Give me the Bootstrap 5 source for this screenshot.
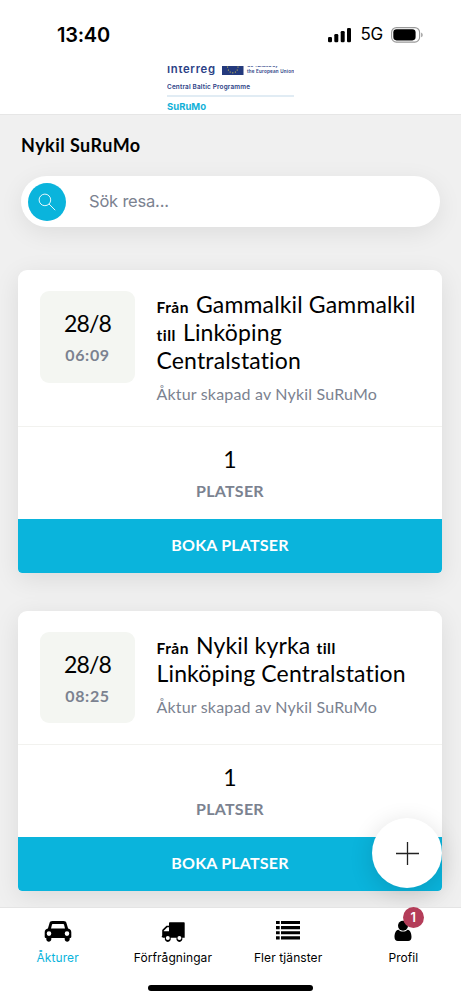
<!DOCTYPE html>
<html lang="sv">
<head>
<meta charset="utf-8">
<meta name="viewport" content="width=device-width, initial-scale=1">
<title>Nykil SuRuMo</title>
<link href="https://cdn.jsdelivr.net/npm/bootstrap@5.3.0/dist/css/bootstrap.min.css" rel="stylesheet">
<style>
  :root { --brand: #0ab4dc; --muted: #7b8290; }
  body { font-family: Lato, sans-serif; color: #000; background: #f0f0f0; font-variant-ligatures: none; }
  svg { display: block; }
  .screen { height: 1000px; overflow: hidden; }
  .top { height: 115px; border-bottom: 1px solid #e6e6e6; }
  .status { height: 66px; padding: 3px 38px 0 57px; font-family: Inter, sans-serif; }
  .clock { font-size: 20px; font-weight: 600; letter-spacing: -.25px; }
  .net { font-size: 17px; letter-spacing: -.2px; margin: 1px 8px 0 8px; }
  .feed { padding: 18px 19px 0 18px; min-height: 0; overflow: hidden; }
  .heading { font-size: 18px; line-height: 24px; font-weight: 700; margin: 0 0 19px 3px; letter-spacing: .45px; }
  .search { height: 51px; margin: 0 2px 43px 3px; padding-left: 7px; border-radius: 26px; box-shadow: 0 6px 24px rgba(0,0,0,.08); }
  .search-icon { width: 38px; height: 38px; background: var(--brand); }
  .search-text { font-family: Inter, sans-serif; font-size: 16.5px; color: var(--muted); margin-left: 23px; letter-spacing: -.2px; }
  .trip { border-radius: 9px 9px 4px 4px; box-shadow: 0 6px 26px rgba(0,0,0,.09); margin-bottom: 37.5px; overflow: hidden; background: #fff; }
  .trip-body { padding: 21px 21px 21px 22px; gap: 21.5px; border-bottom: 1px solid #f2f2ef; }
  .when { width: 95px; height: 91.5px; border-radius: 9px; background: #f4f6f2; flex: none; }
  .day { font-size: 23px; line-height: 34px; letter-spacing: -.8px; margin-top: -1px; }
  .hour { font-size: 16px; line-height: 30px; font-weight: 700; color: var(--muted); letter-spacing: .65px; }
  .route { font-size: 23px; line-height: 28px; font-weight: 400; margin: -1px 0 0; white-space: nowrap; letter-spacing: .15px; }
  .route b { font-size: 15.5px; line-height: 1; letter-spacing: .5px; margin-right: 1px; }
  .by { font-size: 16px; line-height: 30px; color: var(--muted); padding-top: 5px; height: 31px; white-space: nowrap; letter-spacing: .18px; }
  .seats { height: 91.5px; padding-top: 15px; }
  .seats .count { font-size: 23px; line-height: 34px; }
  .seats .unit { font-size: 16px; line-height: 29px; font-weight: 700; color: var(--muted); letter-spacing: .25px; }
  .book { height: 54.5px; border-radius: 0 0 4px 4px; background: var(--brand); color: #fff; font-size: 16px; font-weight: 700; border: 0; width: 100%; padding: 0 0 2px; letter-spacing: .2px; }
  .fab { width: 70px; height: 70px; right: 19px; bottom: 112px; box-shadow: 0 5px 24px rgba(0,0,0,.14); border: 0; padding: 0; }
  .tabs { height: 93px; border-top: 1px solid #e4e4e4; font-family: Inter, sans-serif; font-size: 12px; }
  .tab { width: 115.25px; padding-top: 9px; color: #000; text-decoration: none; letter-spacing: .08px; }
  .tab.on { color: var(--brand); }
  .tab svg { height: 28px; }
  .tab .lbl { line-height: 18px; margin-top: 4px; }
  .count-badge { width: 21px; height: 21px; left: 57px; top: -1px; background: #b43d59; color: #fff; font-size: 13px; font-weight: 600; }
  .home { width: 165px; height: 6px; border-radius: 3px; background: #000; left: 148px; bottom: 9px; }
</style>
</head>
<body>
<div class="screen position-relative d-flex flex-column">
  <header class="top bg-white flex-shrink-0">
    <div class="status d-flex align-items-center">
      <span class="clock me-auto">13:40</span>
      <svg width="24" height="16" viewBox="0 0 24 16"><rect x="0" y="10" width="4" height="5.3" rx="1.3"/><rect x="6.3" y="7" width="4" height="8.3" rx="1.3"/><rect x="12.7" y="4" width="4" height="11.3" rx="1.3"/><rect x="19" y="1" width="4" height="14.3" rx="1.3"/></svg>
      <span class="net">5G</span>
      <svg width="32" height="16" viewBox="0 0 32 16"><rect x=".6" y=".6" width="28" height="14.5" rx="4.8" fill="none" stroke="#999" stroke-width="1.1"/><rect x="2.3" y="2.3" width="22.3" height="11.1" rx="3.3"/><path d="M30.2 5.5q1.5.7 1.5 2.4t-1.5 2.4z" fill="#999"/></svg>
    </div>
    <svg class="mx-auto" width="127" height="46" viewBox="0 0 127 46" font-family="Inter, sans-serif" fill="#2b4186">
      <text x="0" y="7.4" font-size="11.3" font-weight="600" textLength="48">Interreg</text>
      <rect x="55" y="-6" width="21.5" height="15" fill="#243a7d"/>
      <g fill="#e8d44a"><circle cx="60.6" cy="1" r=".6"/><circle cx="61.4" cy="4" r=".6"/><circle cx="63.2" cy="6" r=".6"/><circle cx="65.8" cy="6.8" r=".6"/><circle cx="68.4" cy="6" r=".6"/><circle cx="70.2" cy="4" r=".6"/><circle cx="71" cy="1" r=".6"/></g>
      <text x="80" y="1.3" font-size="4.6" font-weight="600" textLength="31">Co-funded by</text>
      <text x="80" y="6.7" font-size="4.6" font-weight="600" textLength="47">the European Union</text>
      <text x="0" y="22.8" font-size="6.4" font-weight="600" textLength="83">Central Baltic Programme</text>
      <rect y="29.3" width="127" height="1.4" fill="#d5e4ef"/>
      <text x="0" y="43.8" font-size="9.5" font-weight="700" textLength="39" fill="#12b1d8">SuRuMo</text>
    </svg>
  </header>

  <main class="feed flex-grow-1">
    <h1 class="heading">Nykil SuRuMo</h1>
    <div class="search bg-white d-flex align-items-center">
      <span class="search-icon rounded-circle d-flex align-items-center justify-content-center">
        <svg width="18" height="18" viewBox="0 0 18 18" fill="none" stroke="#fff" stroke-width=".9"><circle cx="6.9" cy="6.9" r="5.8"/><path d="M11 11l6.2 6.2"/></svg>
      </span>
      <span class="search-text">Sök resa...</span>
    </div>

    <article class="trip">
      <div class="trip-body d-flex align-items-start">
        <div class="when text-center pt-3"><div class="day">28/8</div><div class="hour">06:09</div></div>
        <div>
          <h2 class="route"><b>Från</b> Gammalkil Gammalkil<br><b>till</b> Linköping<br>Centralstation</h2>
          <div class="by">Åktur skapad av Nykil SuRuMo</div>
        </div>
      </div>
      <div class="seats text-center"><div class="count">1</div><div class="unit">PLATSER</div></div>
      <button class="book d-block">BOKA PLATSER</button>
    </article>

    <article class="trip">
      <div class="trip-body d-flex align-items-start">
        <div class="when text-center pt-3"><div class="day">28/8</div><div class="hour">08:25</div></div>
        <div>
          <h2 class="route"><b>Från</b> Nykil kyrka <b>till</b><br>Linköping Centralstation</h2>
          <div class="by">Åktur skapad av Nykil SuRuMo</div>
        </div>
      </div>
      <div class="seats text-center"><div class="count">1</div><div class="unit">PLATSER</div></div>
      <button class="book d-block">BOKA PLATSER</button>
    </article>
  </main>

  <button class="fab position-absolute rounded-circle bg-white d-flex align-items-center justify-content-center" aria-label="Ny åktur">
    <svg width="23" height="23" viewBox="0 0 23 23" stroke="#222" stroke-width="1.3"><path d="M11.5 0v23M0 11.5h23"/></svg>
  </button>

  <nav class="tabs bg-white d-flex flex-shrink-0 position-relative text-center">
    <a class="tab on">
      <svg class="mx-auto" width="28" viewBox="0 0 28 28"><path fill="#000" fill-rule="evenodd" d="M8.5 4h11c1.8 0 2.700.8 3.100 2.400l1.500 5.200c2 .3 3.200 1.800 3.200 3.700v4.800c0 .5-.3.8-.8.8H25.700v1.300c0 3.300-5 3.300-5 0v-1.300H7.300v1.300c0 3.300-5 3.300-5 0v-1.300H1.500c-.5 0-.8-.3-.8-.8v-4.800c0-1.900 1.200-3.400 3.200-3.700l1.500-5.200C5.800 4.800 6.700 4 8.500 4zM8.700 7c-.4 0-.6.2-.7.600L7 11.600h14l-1-4c-.1-.4-.3-.6-.7-.6zM5 14.300a2.300 2.300 0 1 0 0 4.600a2.300 2.300 0 1 0 0-4.600zM23 14.300a2.300 2.300 0 1 0 0 4.600a2.300 2.300 0 1 0 0-4.600z"/></svg>
      <div class="lbl">Åkturer</div>
    </a>
    <a class="tab">
      <svg class="mx-auto" width="28" viewBox="0 0 28 28"><path fill-rule="evenodd" d="M11 5.300h13.700c.6 0 1 .4 1 1v14.500h-2.500a3 3 0 1 1-5.600 0h-6a3 3 0 1 1-5.600 0H4c-.8 0-1.300-.4-1.300-1.200l.5-1V13.500c0-.4.1-.7.400-1l3.400-3.300c.3-.3.600-.4 1-.4h2V6.300c0-.6.400-1 1-1zM10 10.200H8.300L4.800 13.700v.6H10z"/><circle cx="8.800" cy="21" r="2" fill="#fff"/><circle cx="20.400" cy="21" r="2" fill="#fff"/></svg>
      <div class="lbl">Förfrågningar</div>
    </a>
    <a class="tab">
      <svg class="mx-auto" width="28" viewBox="0 0 28 28"><path d="M2 4h3.700v3.100H2zM7 4h19v3.100H7zM2 9.100h3.700v3.100H2zM7 9.100h19v3.100H7zM2 14.200h3.700v3.100H2zM7 14.200h19v3.100H7zM2 19.300h3.700v3.100H2zM7 19.300h19v3.100H7z"/></svg>
      <div class="lbl">Fler tjänster</div>
    </a>
    <a class="tab position-relative">
      <svg class="mx-auto" width="28" viewBox="0 0 28 28"><circle cx="14" cy="8.800" r="5"/><path d="M9.400 12.700c2.500 2.500 6.700 2.500 9.200 0c2.700.5 3.900 3.600 3.900 7.200c0 2.600-1.300 4.100-3.400 4.100H8.900c-2.100 0-3.400-1.500-3.400-4.100c0-3.600 1.200-6.700 3.900-7.200z"/></svg>
      <span class="count-badge position-absolute rounded-circle d-flex align-items-center justify-content-center">1</span>
      <div class="lbl">Profil</div>
    </a>
    <div class="home position-absolute"></div>
  </nav>
</div>
<script src="https://cdn.jsdelivr.net/npm/bootstrap@5.3.0/dist/js/bootstrap.bundle.min.js"></script>
</body>
</html>
